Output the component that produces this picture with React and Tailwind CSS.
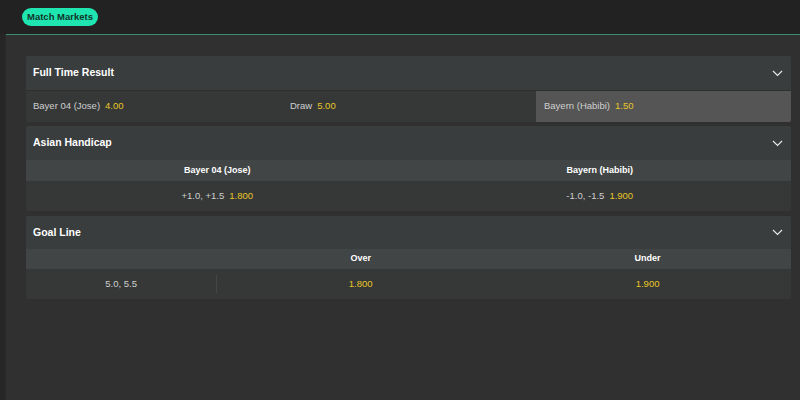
const font = { fontFamily: '"Liberation Sans", Arial, sans-serif' }

function Chevron() {
  return (
    <svg width="11" height="7" viewBox="0 0 11 7" fill="none" className="text-gray-200">
      <path d="M1 1l4.5 4.5L10 1" stroke="currentColor" strokeWidth="1.2" />
    </svg>
  )
}

function CardHeader({ title, h = 'h-[34px]' }) {
  return (
    <div className={`${h} flex items-center justify-between pl-[7px] pr-[8px] bg-[#3a3d3d]`}>
      <span className="text-[10.5px] font-bold text-white">{title}</span>
      <Chevron />
    </div>
  )
}

function Odds({ children }) {
  return <span className="text-[#e8c626] ml-[5px]">{children}</span>
}

export default function App() {
  return (
    <div className="w-[800px] h-[400px] bg-[#303030] flex flex-col text-[9.5px] text-[#cfcfcf]" style={font}>
      {/* Top tabs */}
      <div className="h-[34px] bg-[#222222] flex items-center pl-[22px] shrink-0">
        <span className="h-[18px] px-[5px] rounded-full bg-[#1fe6b0] text-[#12352b] text-[9.5px] font-bold flex items-center">
          Match Markets
        </span>
      </div>
      <div className="flex flex-1">
        <div className="w-[6px] bg-[#262626] border-r border-[#2a2a2a]" />
        <div className="flex-1 flex flex-col">
          <div className="h-px bg-[#3d8a74]" />
          <div className="flex flex-col gap-[4px] pt-[21px] pl-[20px] pr-[9px]">
            {/* Full Time Result */}
            <div className="rounded-[2px] overflow-hidden bg-[#363838]">
              <CardHeader title="Full Time Result" />
              <div className="h-px bg-[#2e3030]" />
              <div className="grid grid-cols-3 h-[31px]">
                <div className="flex items-center pl-[7px]">
                  Bayer 04 (Jose)<Odds>4.00</Odds>
                </div>
                <div className="flex items-center pl-[9px]">
                  Draw<Odds>5.00</Odds>
                </div>
                <div className="flex items-center pl-[8px] bg-[#555555]">
                  Bayern (Habibi)<Odds>1.50</Odds>
                </div>
              </div>
            </div>

            {/* Asian Handicap */}
            <div className="rounded-[2px] overflow-hidden bg-[#363838]">
              <CardHeader title="Asian Handicap" />
              <div className="grid grid-cols-2 h-[21px] bg-[#414545] text-[9px] font-bold text-white">
                <div className="flex items-center justify-center">Bayer 04 (Jose)</div>
                <div className="flex items-center justify-center">Bayern (Habibi)</div>
              </div>
              <div className="grid grid-cols-2 h-[30px]">
                <div className="flex items-center justify-center">
                  +1.0, +1.5<Odds>1.800</Odds>
                </div>
                <div className="flex items-center justify-center">
                  -1.0, -1.5<Odds>1.900</Odds>
                </div>
              </div>
            </div>

            {/* Goal Line */}
            <div className="mt-px rounded-[2px] overflow-hidden bg-[#363838]">
              <CardHeader title="Goal Line" h="h-[33px]" />
              <div className="grid grid-cols-[2fr_3fr_3fr] h-[20px] bg-[#414545] text-[9px] font-bold text-white">
                <div />
                <div className="flex items-center justify-center">Over</div>
                <div className="flex items-center justify-center">Under</div>
              </div>
              <div className="grid grid-cols-[2fr_3fr_3fr] h-[30px]">
                <div className="flex items-center justify-center border-r border-[#444646] my-[6px]">5.0, 5.5</div>
                <div className="flex items-center justify-center text-[#e8c626]">1.800</div>
                <div className="flex items-center justify-center text-[#e8c626]">1.900</div>
              </div>
            </div>
          </div>
        </div>
      </div>
    </div>
  )
}
